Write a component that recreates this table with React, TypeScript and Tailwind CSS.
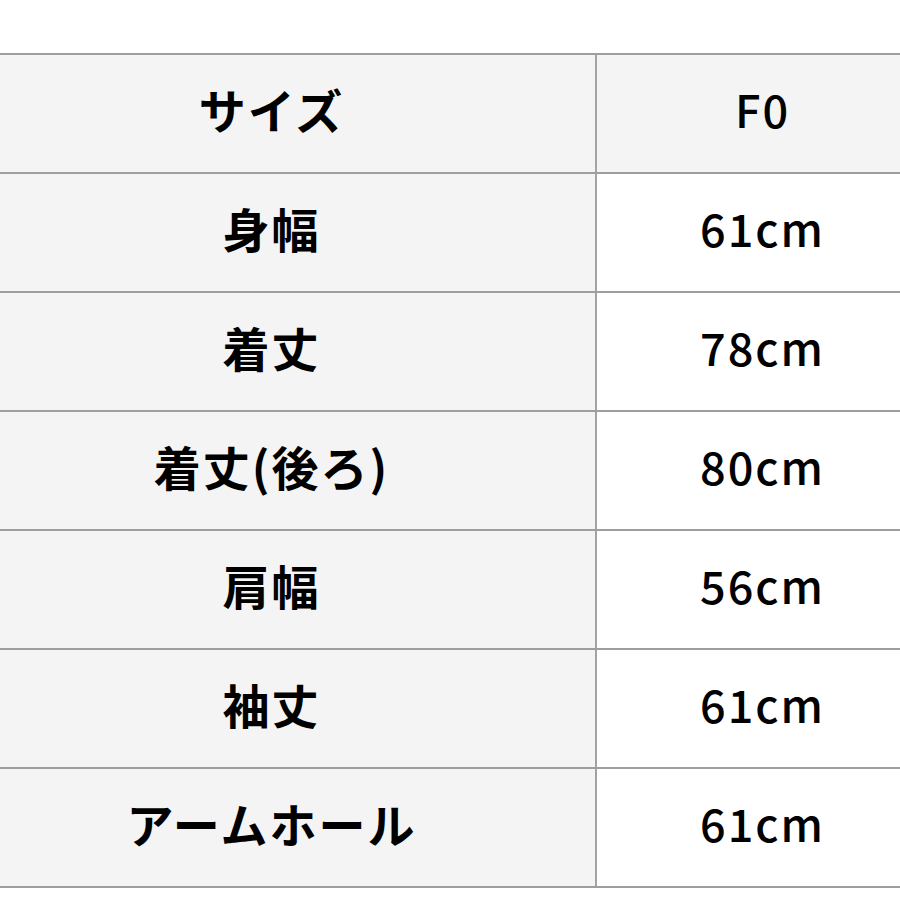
import React from 'react';

const rows = [
  { label: 'サイズ', value: 'F0', header: true },
  { label: '身幅', value: '61cm' },
  { label: '着丈', value: '78cm' },
  { label: '着丈(後ろ)', value: '80cm' },
  { label: '肩幅', value: '56cm' },
  { label: '袖丈', value: '61cm' },
  { label: 'アームホール', value: '61cm' },
];

export default function App() {
  return (
    <div
      className="w-[900px] h-[900px] bg-white overflow-hidden text-black"
      style={{ fontFamily: '"Noto Sans CJK JP", "Noto Sans", sans-serif' }}
    >
      <div className="h-[53px]" />
      <div className="border-b-2 border-[#9e9e9e]">
        {rows.map((row, i) => (
          <div
            key={i}
            className="grid grid-cols-[597px_1fr] h-[119px] border-t-2 border-[#9e9e9e]"
          >
            <div className="flex items-center justify-center pr-[52px] pb-[10px] bg-[#f4f4f4] border-r-2 border-[#a3a3a3] text-[47px] font-semibold leading-none tracking-[2px]">
              {row.label}
            </div>
            <div
              className={
                'flex items-center justify-center pl-[28px] pb-[10px] text-[45px] font-medium leading-none tracking-[2px] ' +
                (row.header ? 'bg-[#f4f4f4]' : 'bg-white')
              }
            >
              {row.value}
            </div>
          </div>
        ))}
      </div>
    </div>
  );
}
